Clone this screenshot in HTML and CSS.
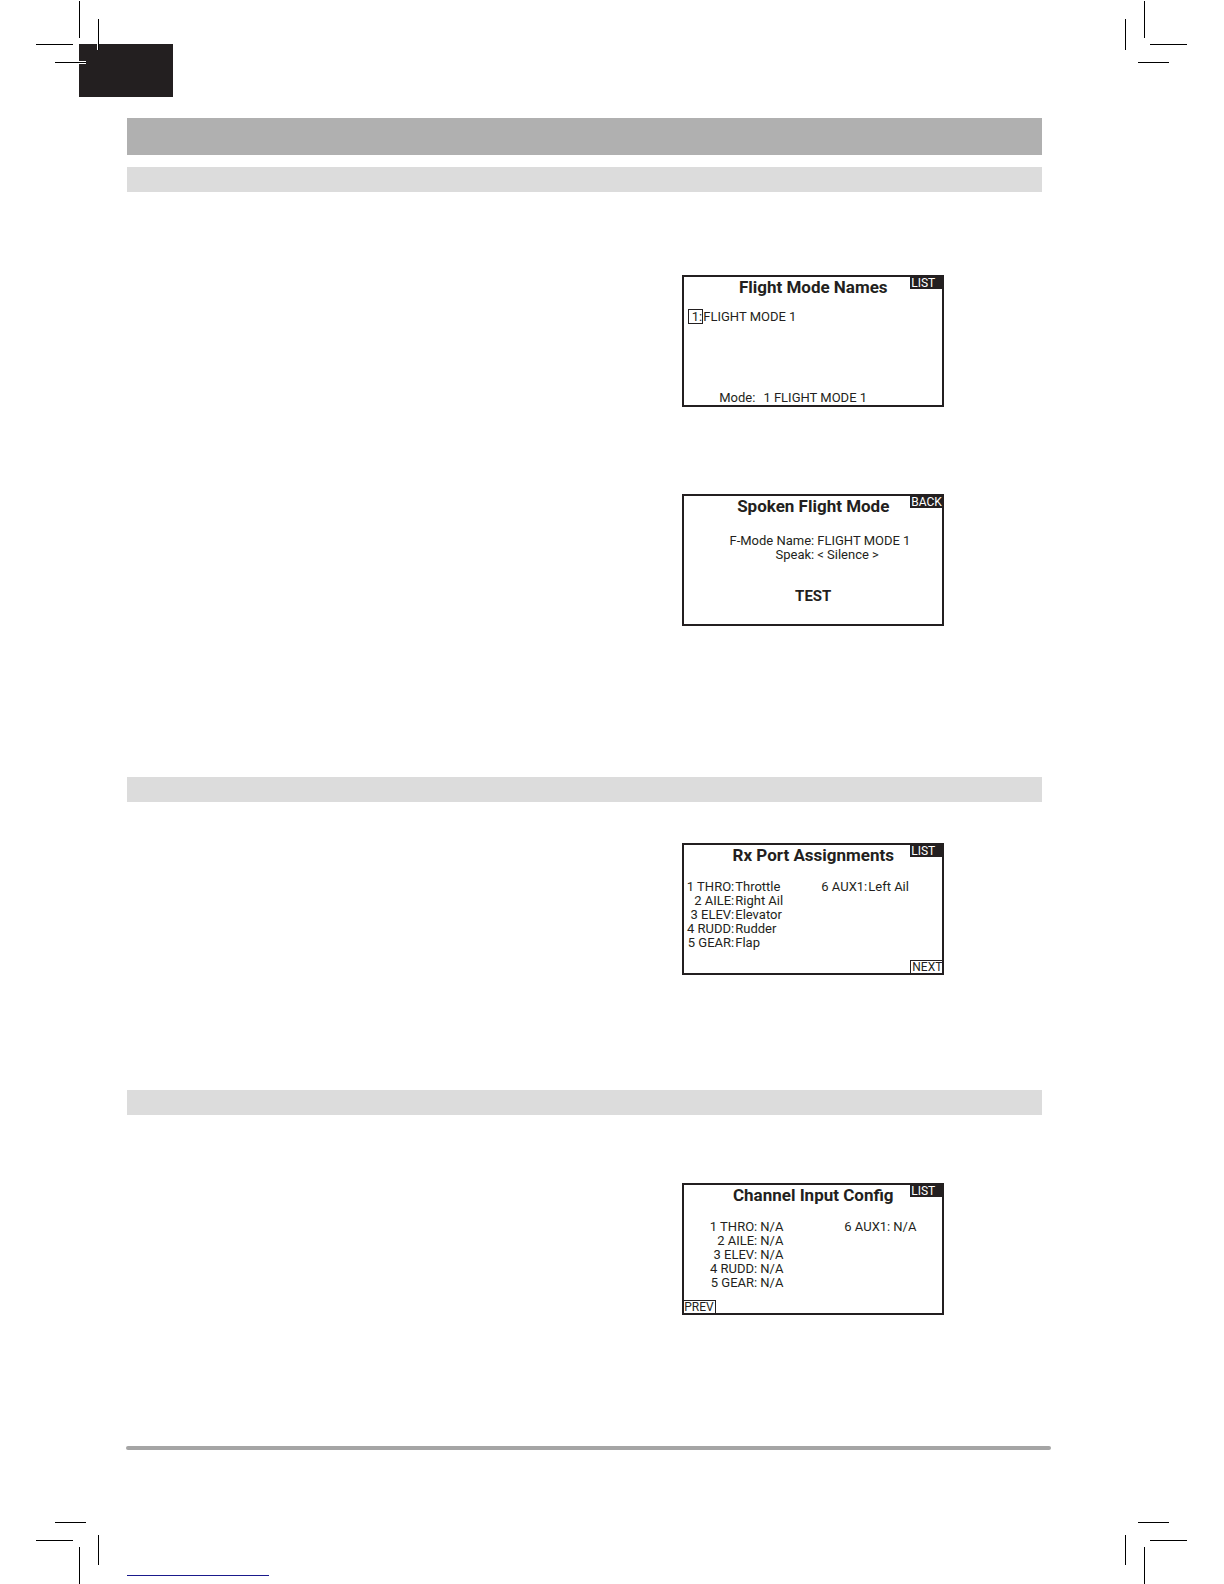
FILE: index.html
```html
<!DOCTYPE html>
<html lang="en">
<head>
<meta charset="utf-8">
<title>Flight Mode Names</title>
<link rel="stylesheet" href="styles.css">
</head>
<body>
<div class="sheet">
  <header class="top"><div class="tab"></div></header>

  <svg class="marks top-left" width="100" height="100" aria-hidden="true"><path class="halo" d="M97 44h1v6h-1zM79 61h7v3h-7z"/><path d="M79 1h1v37h-1zM36 44h37v1H36zM98 19h1v31h-1zM55 62h31v1H55z"/></svg>
  <svg class="marks top-right" width="100" height="100" aria-hidden="true"><path d="M20 1h1v37h-1zM26 44h37v1H26zM1 19h1v31H1zM14 62h31v1H14z"/></svg>
  <svg class="marks bottom-left" width="100" height="100" aria-hidden="true"><path d="M79 63h1v37h-1zM36 56h37v1H36zM98 51h1v30h-1zM55 38h31v1H55z"/></svg>
  <svg class="marks bottom-right" width="100" height="100" aria-hidden="true"><path d="M20 63h1v37h-1zM26 56h37v1H26zM1 51h1v30H1zM14 38h31v1H14z"/></svg>

  <main class="content">
    <div class="bar-main"></div>
    <div class="bar"></div>
    <section class="block modes">
      <div class="screen">
        <div class="head"><h2>Flight Mode Names</h2><button class="key">LIST</button></div>
        <div class="mode-row"><button class="pick">1:</button><span>FLIGHT MODE 1</span></div>
        <div class="status"><span>Mode:</span><span>1 FLIGHT MODE 1</span></div>
      </div>
      <div class="screen">
        <div class="head"><h2>Spoken Flight Mode</h2><button class="key">BACK</button></div>
        <table class="fields spoken">
          <tr><th>F-Mode Name:</th><td>FLIGHT MODE 1</td></tr>
          <tr><th>Speak:</th><td>&lt; Silence &gt;</td></tr>
        </table>
        <button class="test">TEST</button>
      </div>
    </section>

    <div class="bar"></div>
    <section class="block ports">
      <div class="screen">
        <div class="head"><h2>Rx Port Assignments</h2><button class="key">LIST</button></div>
        <div class="columns">
          <table class="fields">
            <tr><th>1 THRO:</th><td>Throttle</td></tr>
            <tr><th>2 AILE:</th><td>Right Ail</td></tr>
            <tr><th>3 ELEV:</th><td>Elevator</td></tr>
            <tr><th>4 RUDD:</th><td>Rudder</td></tr>
            <tr><th>5 GEAR:</th><td>Flap</td></tr>
          </table>
          <table class="fields">
            <tr><th>6 AUX1:</th><td>Left Ail</td></tr>
          </table>
        </div>
        <button class="nav next">NEXT</button>
      </div>
    </section>

    <div class="bar"></div>
    <section class="block inputs">
      <div class="screen">
        <div class="head"><h2>Channel Input Config</h2><button class="key">LIST</button></div>
        <div class="columns inset">
          <table class="fields">
            <tr><th>1 THRO:</th><td>N/A</td></tr>
            <tr><th>2 AILE:</th><td>N/A</td></tr>
            <tr><th>3 ELEV:</th><td>N/A</td></tr>
            <tr><th>4 RUDD:</th><td>N/A</td></tr>
            <tr><th>5 GEAR:</th><td>N/A</td></tr>
          </table>
          <table class="fields">
            <tr><th>6 AUX1:</th><td>N/A</td></tr>
          </table>
        </div>
        <button class="nav prev">PREV</button>
      </div>
    </section>
    <div class="rule"></div>
    <a class="source" href="#" aria-label="Source"></a>
  </main>
</div>
</body>
</html>
```
FILE: styles.css
```css
* { box-sizing: border-box; }

body {
  margin: 0;
  background: #fff;
  color: #231f20;
  font: 13px/14px Roboto, "Liberation Sans", sans-serif;
}

button {
  margin: 0;
  padding: 0;
  border: 0;
  border-radius: 0;
  background: none;
  color: inherit;
  font: inherit;
}

.sheet { position: relative; }

.top { padding: 44px 79px 0; }
.tab { width: 94px; height: 53px; background: #231f20; }

/* printer's crop marks over the sheet corners */
.marks { position: absolute; fill: #000; }
.halo { fill: #fff; }
.top-left { top: 0; left: 0; }
.top-right { top: 0; right: 0; }
.bottom-left { bottom: 0; left: 0; }
.bottom-right { bottom: 0; right: 0; }

.content { padding: 21px 182px 8px 127px; }
.bar-main { height: 37px; margin-bottom: 12px; background: #b0b0b0; }
.bar { height: 25px; background: #dcdcdc; }

.block {
  display: grid;
  grid-template-columns: 1fr 1fr;
  justify-items: center;
}
.modes { padding: 83px 0 151px; row-gap: 87px; }
.ports { padding: 41px 0 115px; }
.inputs { padding: 68px 0 131px; }

.screen {
  grid-column: 2;
  display: flex;
  flex-direction: column;
  width: 262px;
  min-height: 132px;
  border: 2px solid #231f20;
}

.head {
  display: grid;
  grid-template-columns: 32px 1fr 32px;
  align-items: start;
  height: 32px;
}
h2 {
  grid-column: 2;
  margin: 0;
  font-size: 17px;
  line-height: 20px;
  text-align: center;
  white-space: nowrap;
}
.key {
  height: 12px;
  padding-left: 1px;
  background: #231f20;
  color: #fff;
  font-size: 12px;
  line-height: 10px;
  text-align: left;
}

.mode-row { display: flex; align-items: center; padding-left: 4px; }
.pick {
  width: 15px;
  height: 15px;
  border: 1px solid #231f20;
  line-height: 13px;
  text-align: right;
}
.status { display: flex; gap: 8px; margin-top: auto; padding-left: 35px; }

.fields { border-spacing: 0; white-space: nowrap; }
.fields th { padding: 0; font-weight: 400; text-align: right; }
.fields td { padding: 0 0 0 1px; }
.columns {
  display: grid;
  grid-template-columns: 133px 1fr;
  align-items: start;
  padding: 3px 0 0 2px;
}
.columns th { width: 48px; }
.columns.inset { padding-left: 25px; }
.inset td { padding-left: 3px; }
.spoken { align-self: flex-start; margin-top: 6px; }
.spoken th { width: 130px; }
.spoken td { padding-left: 3px; }

.test { align-self: center; margin: auto 0 21px; font-size: 15px; font-weight: 700; }
.nav {
  width: 32px;
  height: 13px;
  margin-top: auto;
  border: 1px solid #231f20;
  border-width: 1px 0 0 1px;
  font-size: 12px;
  line-height: 12px;
  text-align: left;
}
.next { align-self: flex-end; padding-left: 1px; }
.prev { border-width: 1px 1px 0 0; }

.rule { height: 4px; margin: 0 -9px 0 -1px; border-radius: 2px; background: #a5a5a5; }
.source { display: block; width: 142px; height: 126px; border-bottom: 1px solid #1a1a8c; }
```
